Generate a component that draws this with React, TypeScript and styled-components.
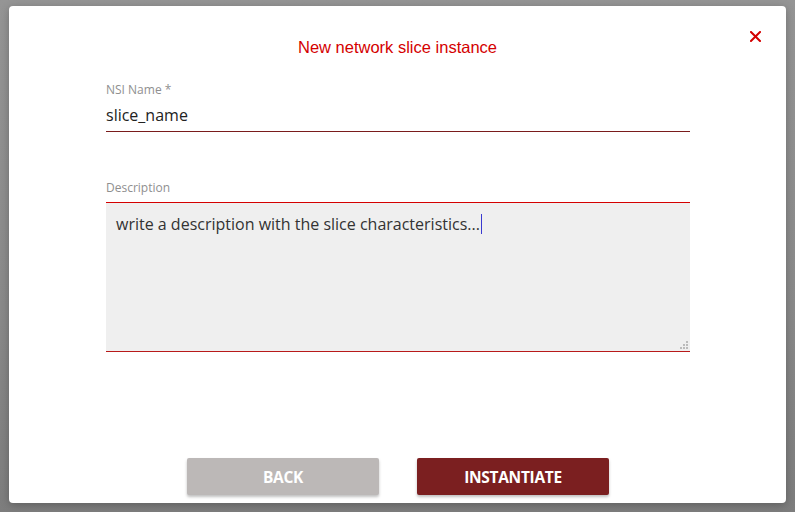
import styled, { createGlobalStyle } from 'styled-components';

const GlobalStyle = createGlobalStyle`
  html, body {
    margin: 0;
    padding: 0;
    background: #8b8b8b;
  }
`;

const Overlay = styled.div`
  width: 795px;
  height: 512px;
  box-sizing: border-box;
  padding: 6px 9px 0 9px;
  background: linear-gradient(180deg, #959595 0%, #8a8a8a 60%, #7d7d7d 100%);
  overflow: hidden;
`;

const Modal = styled.div`
  position: relative;
  width: 777px;
  height: 497px;
  box-sizing: border-box;
  background: #ffffff;
  border-radius: 4px;
  box-shadow: 0 2px 8px rgba(0, 0, 0, 0.25);
  display: flex;
  flex-direction: column;
  padding: 31px 96px 8px 97px;
`;

const Title = styled.div`
  font-family: 'Liberation Sans', Arial, sans-serif;
  font-size: 16.5px;
  color: #d40000;
  text-align: center;
  line-height: 20px;
  margin-left: -97px;
  margin-right: -96px;
`;

const CloseButton = styled.button`
  position: absolute;
  top: 23px;
  right: 24px;
  border: none;
  background: none;
  padding: 0;
  width: 14px;
  height: 14px;
  cursor: pointer;
  display: flex;
  align-items: center;
  justify-content: center;
`;

const Field = styled.div<{ $top: number }>`
  display: flex;
  flex-direction: column;
  margin-top: ${(p) => p.$top}px;
`;

const Label = styled.label`
  font-family: 'Open Sans', sans-serif;
  font-size: 12px;
  color: #8f8f8f;
  line-height: 16px;
`;

const NameInput = styled.div`
  font-family: 'Open Sans', sans-serif;
  font-size: 16px;
  color: #222;
  line-height: 22px;
  padding: 6px 0 5px 0;
  border-bottom: 1px solid #7a1c1c;
`;

const TextArea = styled.div`
  position: relative;
  margin-top: 6px;
  height: 150px;
  box-sizing: border-box;
  background: #efefef;
  border-top: 1px solid #d40000;
  border-bottom: 1px solid #b81a1a;
  padding: 10px 10px;
  font-family: 'Open Sans', sans-serif;
  font-size: 16px;
  line-height: 22px;
  color: #333;
`;

const Caret = styled.span`
  display: inline-block;
  width: 1px;
  height: 20px;
  background: #3a3ad0;
  vertical-align: -4px;
  margin-left: 1px;
`;

const Grip = styled.svg`
  position: absolute;
  right: 2px;
  bottom: 2px;
`;

const Footer = styled.div`
  margin-top: auto;
  display: flex;
  justify-content: center;
  gap: 38px;
`;

const Button = styled.button<{ $primary?: boolean }>`
  width: 192px;
  height: 37px;
  border: none;
  border-radius: 2px;
  background: ${(p) => (p.$primary ? '#7b1f20' : '#bcb8b7')};
  color: #ffffff;
  font-family: 'Open Sans', sans-serif;
  font-weight: 700;
  font-size: 15.5px;
  letter-spacing: -0.3px;
  box-shadow: 0 2px 3px rgba(0, 0, 0, 0.25);
  cursor: pointer;
`;

const App = () => {
  return (
    <>
      <GlobalStyle />
      <Overlay>
        <Modal>
          <Title>New network slice instance</Title>
          <CloseButton aria-label="close">
            <svg width="11" height="11" viewBox="0 0 11 11">
              <path d="M1 1 L10 10 M10 1 L1 10" stroke="#d40000" strokeWidth="2" strokeLinecap="square" />
            </svg>
          </CloseButton>
          <Field $top={25}>
            <Label>NSI Name *</Label>
            <NameInput>slice_name</NameInput>
          </Field>
          <Field $top={48}>
            <Label>Description</Label>
            <TextArea>
              write a description with the slice characteristics...
              <Caret />
              <Grip width="8" height="8" viewBox="0 0 8 8">
                <rect x="6" y="0" width="2" height="2" fill="#bbb" />
                <rect x="3" y="3" width="2" height="2" fill="#bbb" />
                <rect x="6" y="3" width="2" height="2" fill="#bbb" />
                <rect x="0" y="6" width="2" height="2" fill="#bbb" />
                <rect x="3" y="6" width="2" height="2" fill="#bbb" />
                <rect x="6" y="6" width="2" height="2" fill="#bbb" />
              </Grip>
            </TextArea>
          </Field>
          <Footer>
            <Button>BACK</Button>
            <Button $primary>INSTANTIATE</Button>
          </Footer>
        </Modal>
      </Overlay>
    </>
  );
};

export default App;
